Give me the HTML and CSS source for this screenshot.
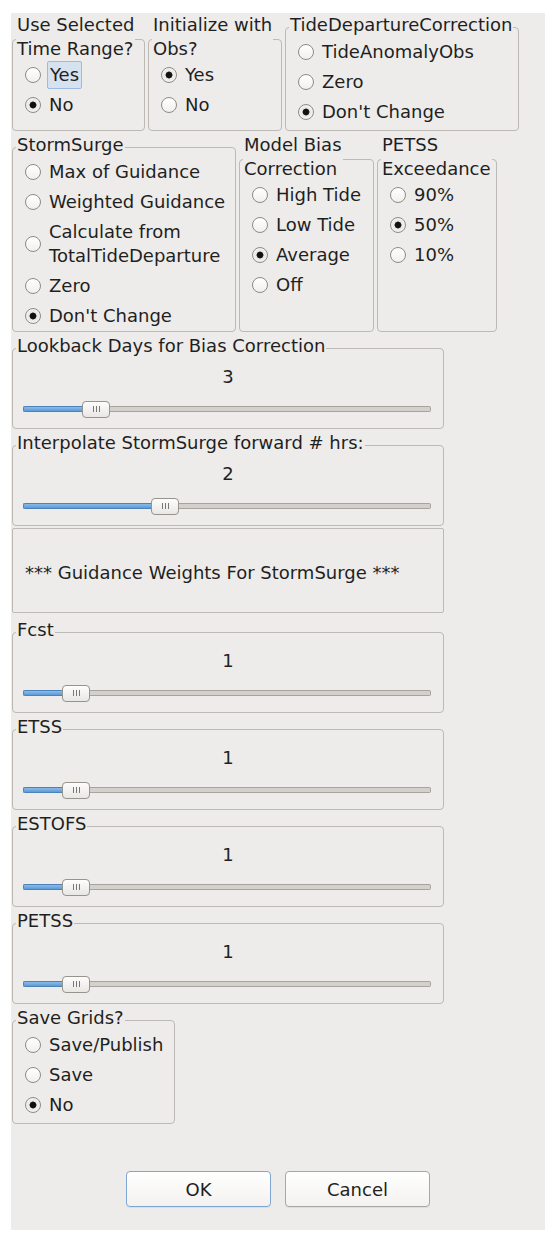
FILE: index.html
```html
<!DOCTYPE html>
<html>
<head>
<meta charset="utf-8">
<link rel="stylesheet" href="styles.css">
</head>
<body>
<div class="dialog">
  <div class="row">
    <div class="group two w133">
      <div class="group-title">Use Selected<br>Time Range?</div>
      <div class="group-box">
        <div class="opt"><span class="radio"></span><span class="focus">Yes</span></div>
        <div class="opt"><span class="radio on"></span><span>No</span></div>
      </div>
    </div>
    <div class="group two w134">
      <div class="group-title">Initialize with<br>Obs?</div>
      <div class="group-box">
        <div class="opt"><span class="radio on"></span><span>Yes</span></div>
        <div class="opt"><span class="radio"></span><span>No</span></div>
      </div>
    </div>
    <div class="group w234">
      <div class="group-title">TideDepartureCorrection</div>
      <div class="group-box">
        <div class="opt"><span class="radio"></span><span>TideAnomalyObs</span></div>
        <div class="opt"><span class="radio"></span><span>Zero</span></div>
        <div class="opt"><span class="radio on"></span><span>Don't Change</span></div>
      </div>
    </div>
  </div>

  <div class="row">
    <div class="group w224 tight">
      <div class="group-title">StormSurge</div>
      <div class="group-box">
        <div class="opt"><span class="radio"></span><span>Max of Guidance</span></div>
        <div class="opt"><span class="radio"></span><span>Weighted Guidance</span></div>
        <div class="opt tall"><span class="radio"></span><span>Calculate from<br>TotalTideDeparture</span></div>
        <div class="opt"><span class="radio"></span><span>Zero</span></div>
        <div class="opt"><span class="radio on"></span><span>Don't Change</span></div>
      </div>
    </div>
    <div class="group two w135">
      <div class="group-title">Model Bias<br>Correction</div>
      <div class="group-box">
        <div class="opt"><span class="radio"></span><span>High Tide</span></div>
        <div class="opt"><span class="radio"></span><span>Low Tide</span></div>
        <div class="opt"><span class="radio on"></span><span>Average</span></div>
        <div class="opt"><span class="radio"></span><span>Off</span></div>
      </div>
    </div>
    <div class="group two w120">
      <div class="group-title">PETSS<br>Exceedance</div>
      <div class="group-box">
        <div class="opt"><span class="radio"></span><span>90%</span></div>
        <div class="opt"><span class="radio on"></span><span>50%</span></div>
        <div class="opt"><span class="radio"></span><span>10%</span></div>
      </div>
    </div>
  </div>

  <div class="group slider-group">
    <div class="group-title">Lookback Days for Bias Correction</div>
    <div class="group-box">
      <div class="value">3</div>
      <div class="slider"><span class="fill" style="width:59px"></span><span class="handle"><span class="grip"></span></span><span class="rest"></span></div>
    </div>
  </div>

  <div class="group slider-group">
    <div class="group-title">Interpolate StormSurge forward # hrs:</div>
    <div class="group-box">
      <div class="value">2</div>
      <div class="slider"><span class="fill" style="width:128px"></span><span class="handle"><span class="grip"></span></span><span class="rest"></span></div>
    </div>
  </div>

  <div class="label-box">*** Guidance Weights For StormSurge ***</div>

  <div class="group slider-group">
    <div class="group-title">Fcst</div>
    <div class="group-box">
      <div class="value">1</div>
      <div class="slider"><span class="fill" style="width:39px"></span><span class="handle"><span class="grip"></span></span><span class="rest"></span></div>
    </div>
  </div>

  <div class="group slider-group">
    <div class="group-title">ETSS</div>
    <div class="group-box">
      <div class="value">1</div>
      <div class="slider"><span class="fill" style="width:39px"></span><span class="handle"><span class="grip"></span></span><span class="rest"></span></div>
    </div>
  </div>

  <div class="group slider-group">
    <div class="group-title">ESTOFS</div>
    <div class="group-box">
      <div class="value">1</div>
      <div class="slider"><span class="fill" style="width:39px"></span><span class="handle"><span class="grip"></span></span><span class="rest"></span></div>
    </div>
  </div>

  <div class="group slider-group">
    <div class="group-title">PETSS</div>
    <div class="group-box">
      <div class="value">1</div>
      <div class="slider"><span class="fill" style="width:39px"></span><span class="handle"><span class="grip"></span></span><span class="rest"></span></div>
    </div>
  </div>

  <div class="group w163">
    <div class="group-title">Save Grids?</div>
    <div class="group-box">
      <div class="opt"><span class="radio"></span><span>Save/Publish</span></div>
      <div class="opt"><span class="radio"></span><span>Save</span></div>
      <div class="opt"><span class="radio on"></span><span>No</span></div>
    </div>
  </div>

  <div class="buttons">
    <button class="btn default">OK</button>
    <button class="btn">Cancel</button>
  </div>
</div>
</body>
</html>
```

FILE: styles.css
```css
html, body {
  margin: 0;
  padding: 0;
  background: #ffffff;
}

body {
  font-family: "DejaVu Sans", "Noto Sans", sans-serif;
  font-size: 18px;
  color: #1f1f1f;
}

.dialog {
  box-sizing: border-box;
  width: 534px;
  height: 1217px;
  margin: 13px 0 0 11px;
  padding: 0 0 0 1px;
  background: #edecea;
  display: flex;
  flex-direction: column;
  gap: 2px;
}

.row {
  display: flex;
  gap: 3px;
  align-items: stretch;
}

.group {
  display: flex;
  flex-direction: column;
  flex: none;
}

.w120 { width: 120px; }
.w133 { width: 133px; }
.w134 { width: 134px; }
.w135 { width: 135px; }
.w163 { width: 163px; }
.w224 { width: 224px; }
.w234 { width: 234px; }

.group-title {
  align-self: flex-start;
  margin-left: 4px;
  padding: 0 1px;
  line-height: 24px;
  background: #edecea;
  position: relative;
  z-index: 1;
  white-space: nowrap;
}

.group-box {
  flex: 1;
  border: 1px solid #bdb9b4;
  border-radius: 4px;
  margin-top: -10px;
  padding: 9px 0 3px 12px;
}

.group.tight .group-box {
  padding-bottom: 0;
}

.group.two .group-box {
  margin-top: -22px;
  padding-top: 20px;
}

.opt {
  display: flex;
  align-items: center;
  gap: 8px;
  height: 30px;
  line-height: 24px;
  white-space: nowrap;
}

.opt.tall {
  height: 54px;
}

.radio {
  flex: none;
  box-sizing: border-box;
  width: 16px;
  height: 16px;
  border-radius: 50%;
  border: 1px solid #8f8b86;
  background: linear-gradient(#ffffff, #f1f0ee);
}

.radio.on {
  background: radial-gradient(circle at 50% 50%, #111 0, #111 2.6px, #3a3a3a 3.2px, #e9e7e4 3.8px, #f4f3f1 7px);
}

.focus {
  margin-left: -2px;
  padding: 1px 2px;
  line-height: 24px;
  background: #d6e2ef;
  border: 1px solid #9dbbe0;
  border-radius: 2px;
}

.slider-group {
  width: 432px;
}

.slider-group .group-box {
  padding: 16px 12px 9px 10px;
}

.value {
  text-align: center;
  line-height: 24px;
  margin-right: -2px;
}

.slider {
  margin-top: 10px;
  height: 20px;
  display: flex;
  align-items: center;
}

.fill {
  flex: none;
  box-sizing: border-box;
  height: 6px;
  border: 1px solid #4d82b9;
  border-right: none;
  border-radius: 2px 0 0 2px;
  background: linear-gradient(#8bbbe8, #5b9bd8);
}

.rest {
  flex: 1;
  box-sizing: border-box;
  height: 6px;
  border: 1px solid #a7a39e;
  border-left: none;
  border-radius: 0 2px 2px 0;
  background: #d4d1cd;
}

.handle {
  flex: none;
  box-sizing: border-box;
  width: 28px;
  height: 17px;
  border: 1px solid #97938d;
  border-radius: 4px;
  background: linear-gradient(#fdfdfc, #e9e7e4);
  display: flex;
  align-items: center;
  justify-content: center;
}

.grip {
  width: 7px;
  height: 6px;
  background: repeating-linear-gradient(90deg, #7a7671 0, #7a7671 1px, transparent 1px, transparent 3px);
}

.label-box {
  box-sizing: border-box;
  width: 432px;
  height: 85px;
  margin-bottom: 3px;
  border: 1px solid #bdb9b4;
  border-radius: 2px;
  padding: 3px 0 0 12px;
  display: flex;
  align-items: center;
}

.buttons {
  margin-top: auto;
  padding-bottom: 23px;
  display: flex;
  justify-content: center;
  gap: 14px;
  padding-right: 1px;
}

.btn {
  box-sizing: border-box;
  width: 145px;
  height: 36px;
  font-family: "DejaVu Sans", "Noto Sans", sans-serif;
  font-size: 18px;
  color: #1f1f1f;
  border: 1px solid #aaa6a1;
  border-radius: 4px;
  background: linear-gradient(#ffffff, #f3f2f0);
  box-shadow: 0 1px 0 rgba(0, 0, 0, 0.06);
  padding: 0;
}

.btn.default {
  border-color: #7fa6d2;
}
```
